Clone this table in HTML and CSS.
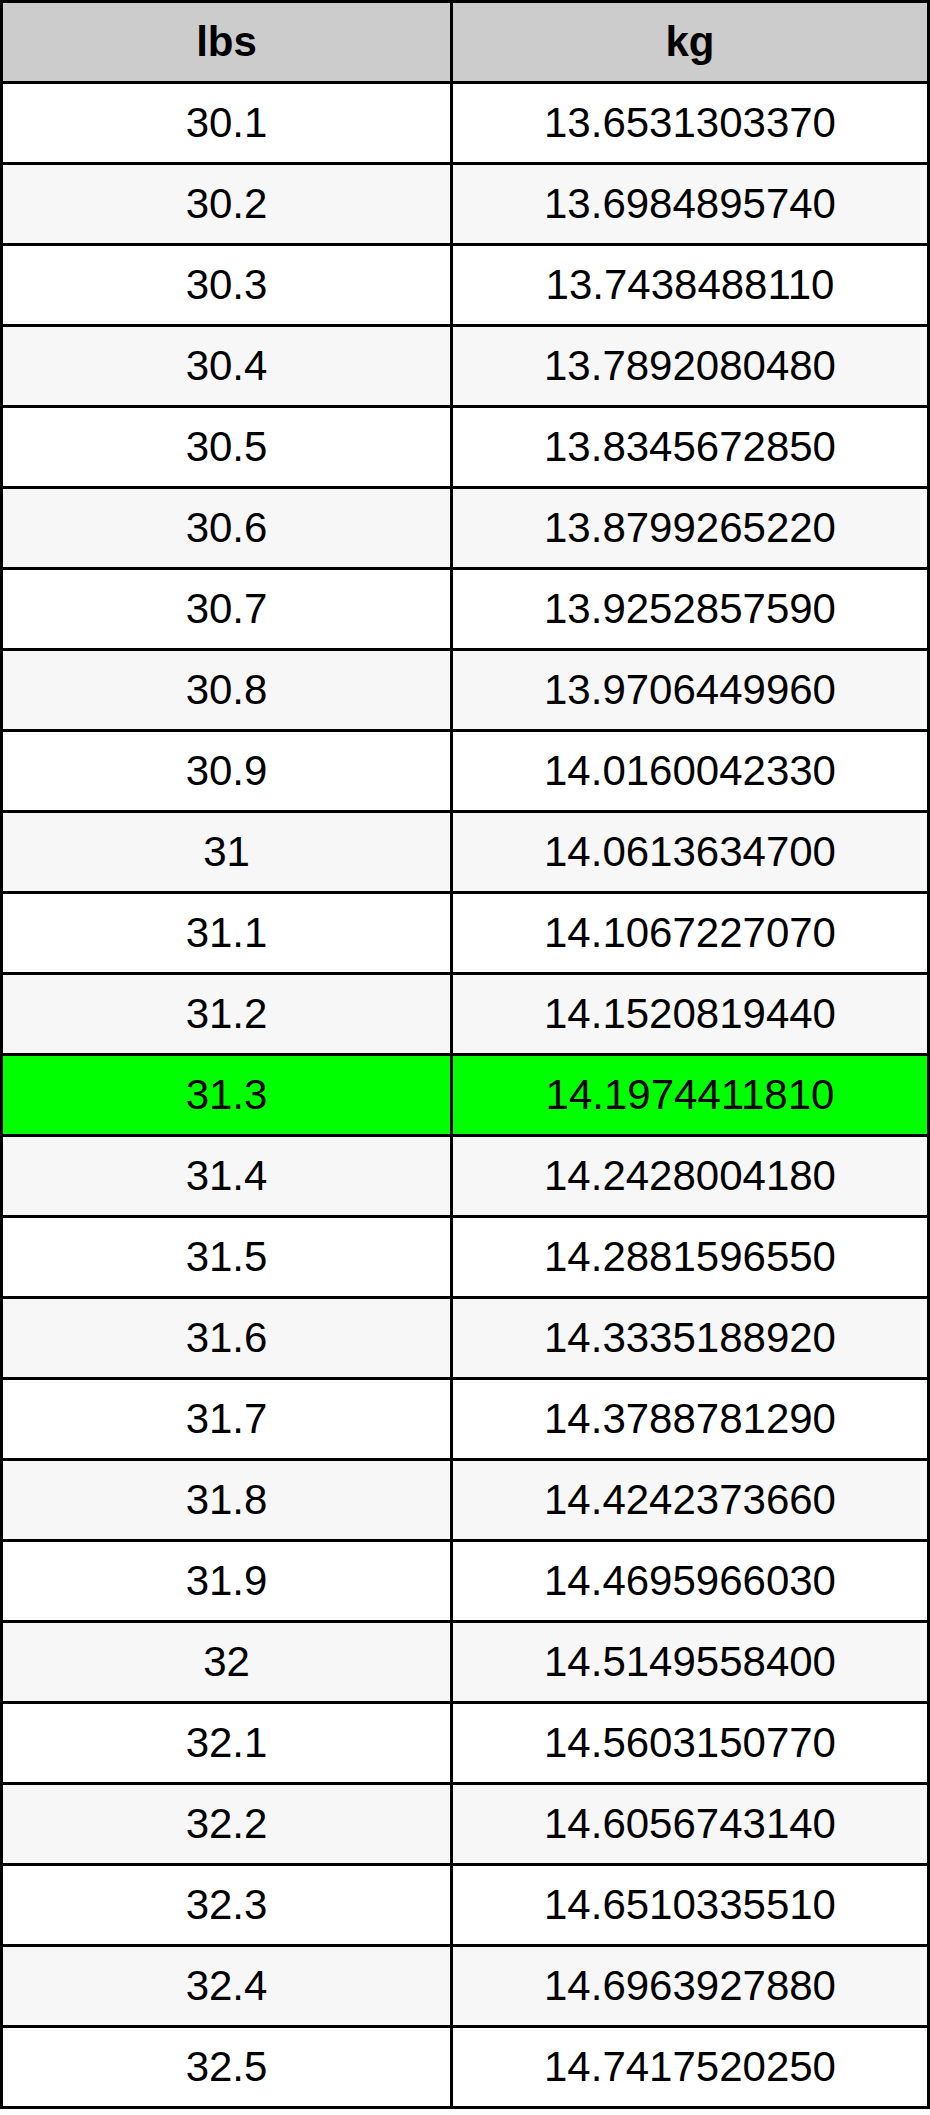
FILE: index.html
```html
<!DOCTYPE html>
<html>
<head>
<meta charset="utf-8">
<title>lbs to kg</title>
<link rel="stylesheet" href="styles.css">
</head>
<body>
<table class="conv">
  <thead>
    <tr><th class="c1">lbs</th><th class="c2">kg</th></tr>
  </thead>
  <tbody>
    <tr><td>30.1</td><td>13.6531303370</td></tr>
    <tr><td>30.2</td><td>13.6984895740</td></tr>
    <tr><td>30.3</td><td>13.7438488110</td></tr>
    <tr><td>30.4</td><td>13.7892080480</td></tr>
    <tr><td>30.5</td><td>13.8345672850</td></tr>
    <tr><td>30.6</td><td>13.8799265220</td></tr>
    <tr><td>30.7</td><td>13.9252857590</td></tr>
    <tr><td>30.8</td><td>13.9706449960</td></tr>
    <tr><td>30.9</td><td>14.0160042330</td></tr>
    <tr><td>31</td><td>14.0613634700</td></tr>
    <tr><td>31.1</td><td>14.1067227070</td></tr>
    <tr><td>31.2</td><td>14.1520819440</td></tr>
    <tr class="hl"><td>31.3</td><td>14.1974411810</td></tr>
    <tr><td>31.4</td><td>14.2428004180</td></tr>
    <tr><td>31.5</td><td>14.2881596550</td></tr>
    <tr><td>31.6</td><td>14.3335188920</td></tr>
    <tr><td>31.7</td><td>14.3788781290</td></tr>
    <tr><td>31.8</td><td>14.4242373660</td></tr>
    <tr><td>31.9</td><td>14.4695966030</td></tr>
    <tr><td>32</td><td>14.5149558400</td></tr>
    <tr><td>32.1</td><td>14.5603150770</td></tr>
    <tr><td>32.2</td><td>14.6056743140</td></tr>
    <tr><td>32.3</td><td>14.6510335510</td></tr>
    <tr><td>32.4</td><td>14.6963927880</td></tr>
    <tr><td>32.5</td><td>14.7417520250</td></tr>
  </tbody>
</table>
</body>
</html>
```

FILE: styles.css
```css
html, body {
  margin: 0;
  padding: 0;
  background: #ffffff;
}

.conv {
  width: 930px;
  border-collapse: collapse;
  table-layout: fixed;
  font-family: "Liberation Sans", Arial, sans-serif;
  font-size: 42px;
  color: #000;
}

.conv th,
.conv td {
  border: 3px solid #000;
  height: 78px;
  padding: 0;
  text-align: center;
  vertical-align: middle;
  box-sizing: content-box;
}

.conv th {
  background: #cccccc;
  font-weight: bold;
}

.conv .c1 {
  width: 447px;
}

.conv tbody tr:nth-child(odd) td {
  background: #ffffff;
}

.conv tbody tr:nth-child(even) td {
  background: #f7f7f7;
}

.conv tbody tr.hl td {
  background: #00ff00;
}
```
